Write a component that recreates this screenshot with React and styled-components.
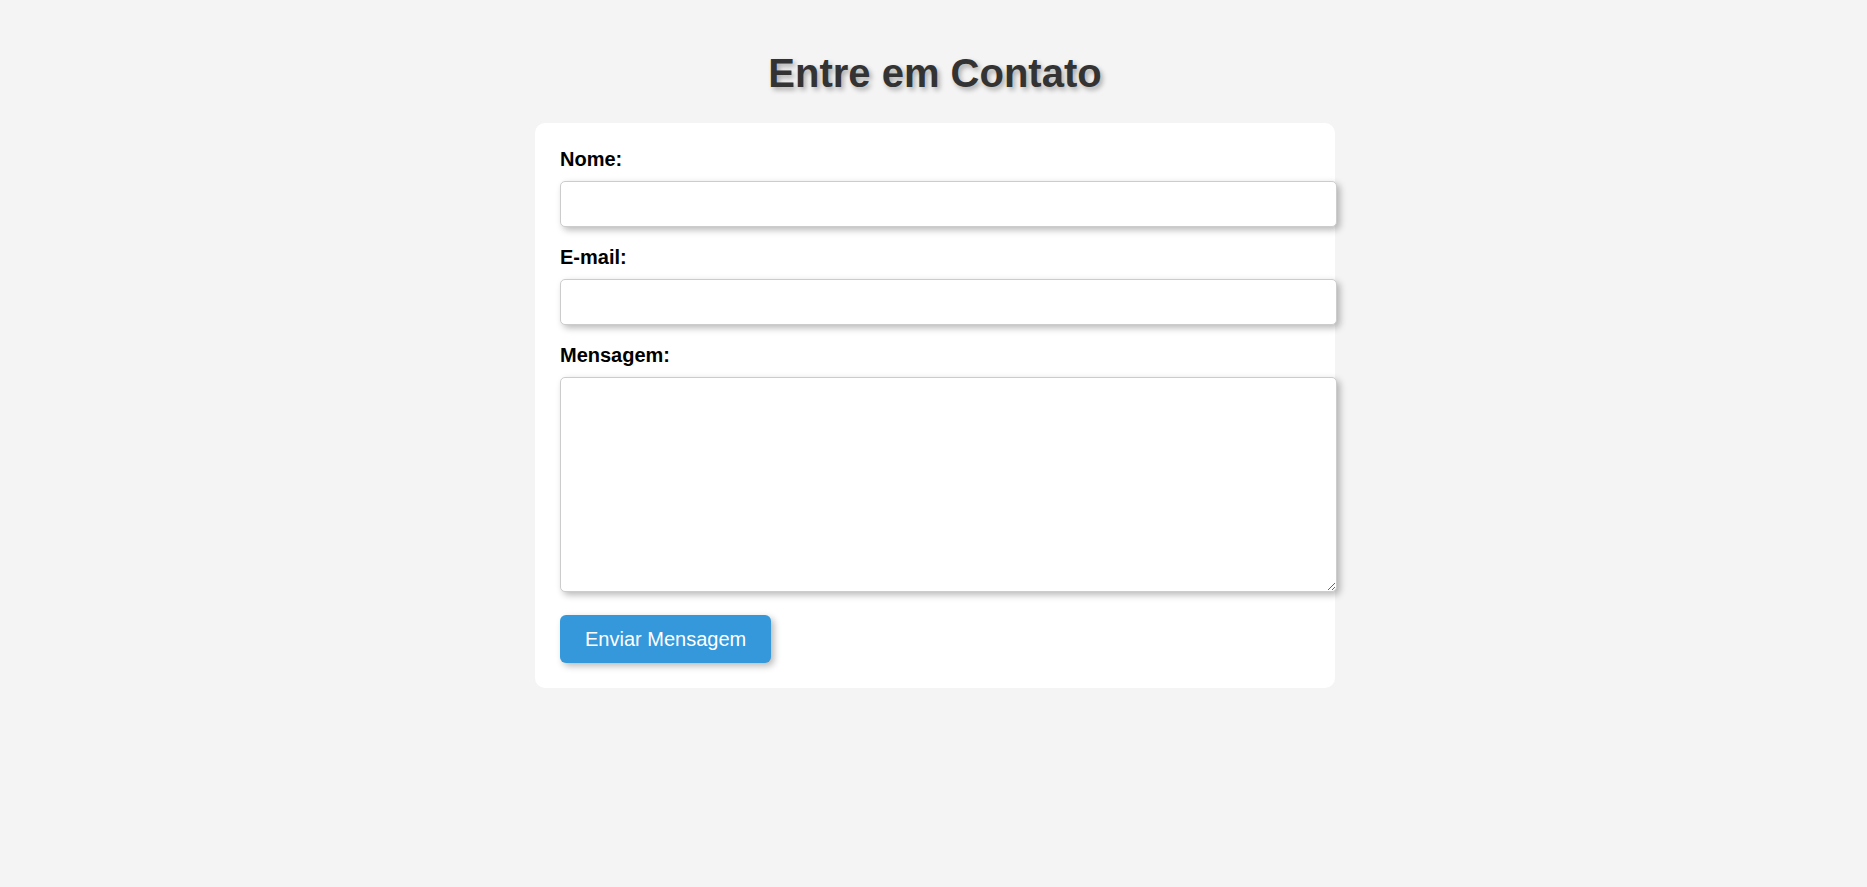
import React from "react";
import styled, { createGlobalStyle } from "styled-components";

const GlobalStyle = createGlobalStyle`
  html, body {
    margin: 0;
    background: #f4f4f4;
    font-family: "Liberation Sans", Arial, sans-serif;
  }
`;

const Page = styled.div`
  padding: 26px 25px 25px 28px;
`;

const Title = styled.h1`
  margin: 25px 0 27px;
  text-align: center;
  font-size: 40px;
  font-weight: bold;
  color: #333;
  text-shadow: 2.5px 2.5px 5px rgba(0, 0, 0, 0.3);
`;

const Card = styled.form`
  max-width: 750px;
  margin: 0 auto;
  padding: 25px;
  background: #fff;
  border-radius: 10px;
`;

const Label = styled.label`
  display: block;
  margin-bottom: 10px;
  font-size: 20px;
  font-weight: bold;
  color: #000;
`;

const Field = styled.input`
  display: block;
  width: 100%;
  margin: 0 0 19px;
  padding: 12.5px;
  font-family: "Liberation Sans", Arial, sans-serif;
  font-size: 16.5px;
  border: 1px solid #ccc;
  border-radius: 5px;
  background: #fff;
  box-shadow: 3px 3px 7px rgba(0, 0, 0, 0.28);
  outline: none;
`;

const Message = styled(Field).attrs({ as: "textarea" })`
  height: 188px;
  margin-bottom: 23px;
`;

const SendButton = styled.button`
  display: block;
  padding: 12.5px 25px;
  border: none;
  border-radius: 6px;
  background: #3498db;
  color: #fff;
  font-family: "Liberation Sans", Arial, sans-serif;
  font-size: 20px;
  box-shadow: 3px 3px 7px rgba(0, 0, 0, 0.28);
  cursor: pointer;
`;

const App = () => {
  return (
    <>
      <GlobalStyle />
      <Page>
        <Title>Entre em Contato</Title>
        <Card onSubmit={(e) => e.preventDefault()}>
          <Label htmlFor="nome">Nome:</Label>
          <Field id="nome" type="text" />
          <Label htmlFor="email">E-mail:</Label>
          <Field id="email" type="email" />
          <Label htmlFor="mensagem">Mensagem:</Label>
          <Message id="mensagem" />
          <SendButton type="submit">Enviar Mensagem</SendButton>
        </Card>
      </Page>
    </>
  );
};

export default App;
